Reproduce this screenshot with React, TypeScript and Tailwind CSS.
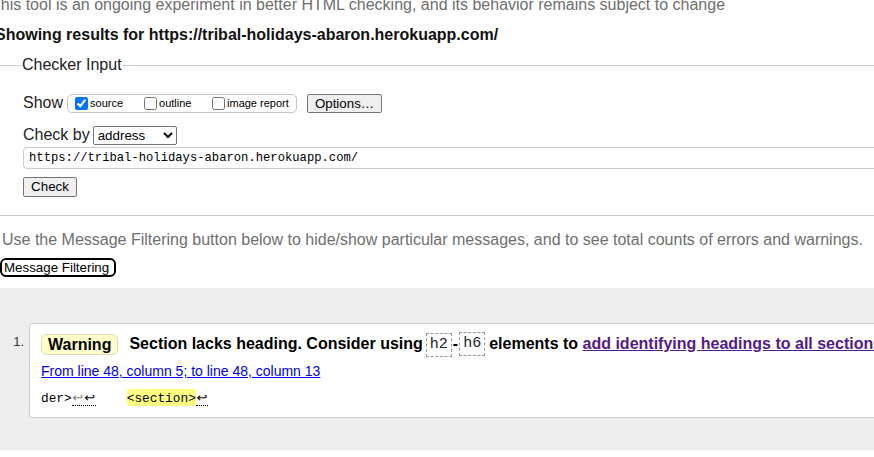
import React from "react";

const sans = "font-['Liberation_Sans',Arial,sans-serif]";
const mono = "font-['Liberation_Mono','DejaVu_Sans_Mono',monospace]";

const CheckOption = ({
  label,
  checked,
  width,
}: {
  label: string;
  checked?: boolean;
  width: string;
}) => (
  <label className={`flex items-center ${width}`}>
    <input
      type="checkbox"
      defaultChecked={checked}
      className="m-0 h-[13px] w-[13px] accent-[#0075ff]"
    />
    <span className="ml-[2px] text-[11px] leading-[13px] text-black">
      {label}
    </span>
  </label>
);

const Code = ({ children }: { children: React.ReactNode }) => (
  <span
    className={`inline-block h-[24px] border border-dashed border-[#999] px-[3px] text-[15px] font-normal leading-[22px] text-[#222] ${mono}`}
  >
    {children}
  </span>
);

const Arrow = ({ faint }: { faint?: boolean }) => (
  <span
    className={`inline-block w-[12px] text-center font-['DejaVu_Sans',sans-serif] text-[13px] ${faint ? "text-[#888]" : "text-black"}`}
  >
    ↩
  </span>
);

export default function App() {
  return (
    <div
      className={`relative h-[457px] w-[874px] overflow-hidden bg-white ${sans}`}
    >
      {/* intro */}
      <p className="-ml-[9px] -mt-[5px] h-[20px] whitespace-nowrap text-[16px] leading-[20px] text-[#6f6f6f]">
        This tool is an ongoing experiment in better HTML checking, and its
        behavior remains subject to change
      </p>
      <h2 className="-ml-[5px] mt-[10px] h-[20px] whitespace-nowrap text-[16px] font-bold leading-[20px] text-[#111]">
        Showing results for https://tribal-holidays-abaron.herokuapp.com/
      </h2>

      {/* checker input fieldset */}
      <div className="mt-[10px] w-[900px] border-b border-[#cccccc] pb-[17px]">
        <div className="flex h-[20px] items-center">
          <div className="h-px w-[21px] bg-[#cccccc]" />
          <span className="px-[1px] text-[16px] leading-[20px] text-[#222]">
            Checker Input
          </span>
          <div className="h-px flex-1 bg-[#cccccc]" />
        </div>

        <div className="pl-[23px]">
          <div className="mt-[18px] flex h-[20px] items-center">
            <span className="text-[16px] leading-[20px] text-[#222]">Show</span>
            <div className="ml-[4px] flex h-[19px] w-[230px] items-center rounded-[5px] border border-[#c4c4c4] pl-[7px]">
              <CheckOption label="source" checked width="w-[69px]" />
              <CheckOption label="outline" width="w-[68px]" />
              <CheckOption label="image report" width="w-[84px]" />
            </div>
            <button className="ml-[10px] h-[19px] w-[75px] rounded-[2px] border border-[#767676] bg-[#efefef] text-[13.33px] leading-[17px] text-black">
              Options…
            </button>
          </div>

          <div className="mt-[12px] flex h-[20px] items-center">
            <span className="text-[16px] leading-[20px] text-[#222]">
              Check by
            </span>
            <select
              defaultValue="address"
              className="ml-[3px] h-[19px] w-[84px] rounded-[2px] border border-[#767676] bg-white text-[13.33px] text-black"
            >
              <option value="address">address</option>
              <option value="file">file upload</option>
              <option value="text">text input</option>
            </select>
          </div>

          <input
            readOnly
            value="https://tribal-holidays-abaron.herokuapp.com/"
            className={`mt-[2px] block h-[22px] w-[900px] rounded-[4px] border border-[#cccccc] px-[5px] text-[12.2px] text-black ${mono}`}
          />

          <button className="mt-[8px] h-[20px] w-[54px] rounded-[2px] border border-[#767676] bg-[#efefef] text-[13.33px] leading-[18px] text-black">
            Check
          </button>
        </div>
      </div>

      {/* filtering */}
      <p className="ml-[2px] mt-[14px] h-[20px] whitespace-nowrap text-[16px] leading-[20px] text-[#6f6f6f]">
        Use the Message Filtering button below to hide/show particular
        messages, and to see total counts of errors and warnings.
      </p>
      <button className="mt-[8px] h-[19px] w-[116px] rounded-[6px] border-2 border-black bg-white pl-[2px] text-left text-[13.33px] leading-[15px] text-black">
        Message Filtering
      </button>

      {/* results */}
      <div className="mt-[9px] h-[162px] bg-[#eeeeee] pt-[35px]">
        <div className="flex">
          <div className="w-[29px] shrink-0 pr-[5px] pt-[11px] text-right text-[13px] leading-[16px] text-[#333]">
            1.
          </div>
          <div className="h-[95px] w-[900px] shrink-0 rounded-[3px] border border-[#cccccc] bg-white pl-[11px] pt-[8px]">
            <div className="flex h-[24px] items-center whitespace-nowrap text-[16px] font-bold leading-[24px] text-black">
              <span className="flex h-[21px] items-center rounded-[6px] border border-[#dcdcb0] bg-[#ffffcc] px-[6px] leading-[19px]">
                Warning
              </span>
              <span className="ml-[11px]">
                Section lacks heading. Consider using{" "}
              </span>
              <span className="ml-[3px]">
                <Code>h2</Code>
              </span>
              <span className="mx-[1px]">-</span>
              <Code>h6</Code>
              <span className="ml-[4px]">elements to&nbsp;</span>
              <a href="#" className="text-[#551a8b] underline">
                add identifying headings to all sections
              </a>
              .
            </div>
            <div className="mt-[7px] h-[16px] text-[14px] leading-[16px]">
              <a href="#" className="text-[#0000ee] underline">
                From line 48, column 5; to line 48, column 13
              </a>
            </div>
            <div
              className={`mt-[10px] flex h-[17px] whitespace-pre text-[12.8px] leading-[17px] text-black ${mono}`}
            >
              <span className="pt-[1px]">der&gt;</span>
              <span className="inline-block h-[17px] border-b border-dotted border-black">
                <Arrow faint />
                <Arrow />
              </span>
              <span className="ml-[31px] inline-block h-[17px] bg-[#ffff80] pt-[1px]">
                &lt;section&gt;
              </span>
              <span className="inline-block h-[17px] border-b border-dotted border-black">
                <Arrow />
              </span>
            </div>
          </div>
        </div>
      </div>
    </div>
  );
}
